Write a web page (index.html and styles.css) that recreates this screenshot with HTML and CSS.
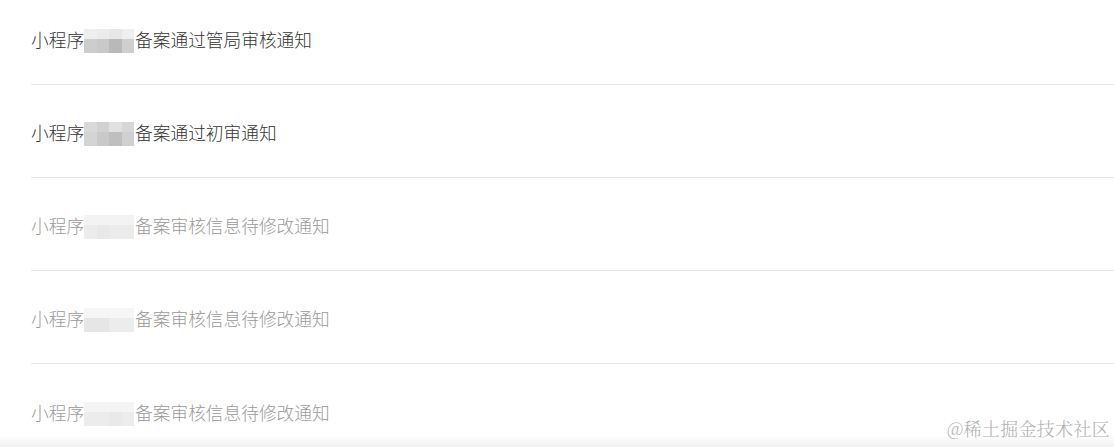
FILE: index.html
```html
<!DOCTYPE html>
<html lang="zh">
<head>
<meta charset="utf-8">
<link rel="stylesheet" href="styles.css">
</head>
<body>
<div class="list">
  <div class="row first dark">
    <span>小程序</span>
    <span class="mosaic m1"><i></i><i></i><i></i><i></i><i></i><i></i><i></i><i></i></span>
    <span>备案通过管局审核通知</span>
  </div>
  <div class="row dark">
    <span>小程序</span>
    <span class="mosaic m2"><i></i><i></i><i></i><i></i><i></i><i></i><i></i><i></i></span>
    <span>备案通过初审通知</span>
  </div>
  <div class="row light">
    <span>小程序</span>
    <span class="mosaic m3"><i></i><i></i><i></i><i></i><i></i><i></i><i></i><i></i></span>
    <span>备案审核信息待修改通知</span>
  </div>
  <div class="row light">
    <span>小程序</span>
    <span class="mosaic m4"><i></i><i></i><i></i><i></i><i></i><i></i><i></i><i></i></span>
    <span>备案审核信息待修改通知</span>
  </div>
  <div class="row light last">
    <span>小程序</span>
    <span class="mosaic m5"><i></i><i></i><i></i><i></i><i></i><i></i><i></i><i></i></span>
    <span>备案审核信息待修改通知</span>
  </div>
</div>
<div class="fade"></div>
<div class="watermark">@稀土掘金技术社区</div>
</body>
</html>
```
FILE: styles.css
```css
html, body {
  margin: 0;
  padding: 0;
  background: #fff;
  width: 1114px;
  height: 447px;
  overflow: hidden;
}
body {
  position: relative;
  font-family: "Noto Sans CJK SC", "Noto Sans", sans-serif;
}
.list {
  padding-left: 31px;
}
.row {
  display: flex;
  align-items: center;
  height: 93px;
  border-bottom: 1px solid #e6e6e6;
  font-size: 17.7px;
  font-weight: 300;
  line-height: 24px;
  padding-top: 2px;
  box-sizing: border-box;
}
.row.first {
  height: 85px;
  padding-top: 0;
  padding-bottom: 7px;
}
.row.last {
  border-bottom: none;
}
.dark { color: #333; }
.light { color: #9a9a9a; }
.mosaic {
  display: grid;
  grid-template-columns: repeat(4, 12.5px);
  grid-template-rows: 10px 14px;
  width: 50px;
  margin: 0 1px 0 0;
  position: relative;
  top: 2px;
}
.mosaic i { display: block; }
.m1 i:nth-child(1) { background: #eeeeee; }
.m1 i:nth-child(2) { background: #ebebeb; }
.m1 i:nth-child(3) { background: #e7e7e7; }
.m1 i:nth-child(4) { background: #efefef; }
.m1 i:nth-child(5) { background: #cdcdcd; }
.m1 i:nth-child(6) { background: #c9c9c9; }
.m1 i:nth-child(7) { background: #b9b9b9; }
.m1 i:nth-child(8) { background: #cfcfcf; }
.m2 i:nth-child(1) { background: #d9d9d9; }
.m2 i:nth-child(2) { background: #d2d2d2; }
.m2 i:nth-child(3) { background: #e1e1e1; }
.m2 i:nth-child(4) { background: #d7d7d7; }
.m2 i:nth-child(5) { background: #d4d4d4; }
.m2 i:nth-child(6) { background: #c9c9c9; }
.m2 i:nth-child(7) { background: #bfbfbf; }
.m2 i:nth-child(8) { background: #d0d0d0; }
.m3 i, .m4 i, .m5 i { background: #ececec; }
.m3 i:nth-child(-n+4) { background: #f3f3f3; }
.m3 i:nth-child(6) { background: #e8e8e8; }
.m4 i:nth-child(-n+4) { background: #f6f6f6; }
.m4 i:nth-child(5), .m4 i:nth-child(6) { background: #e6e6e6; }
.m5 i:nth-child(-n+4) { background: #f4f4f4; }
.m5 i:nth-child(7) { background: #e9e9e9; }
.fade {
  position: absolute;
  left: 0;
  right: 0;
  bottom: 0;
  height: 12px;
  background: linear-gradient(to bottom, rgba(243,243,243,0), #f1f1f1);
}
.watermark {
  position: absolute;
  right: 4px;
  bottom: 6px;
  font-family: "Noto Serif CJK SC", "Noto Sans CJK SC", serif;
  font-size: 18px;
  font-weight: 300;
  color: #b0b0b0;
  letter-spacing: 0.3px;
}
```
